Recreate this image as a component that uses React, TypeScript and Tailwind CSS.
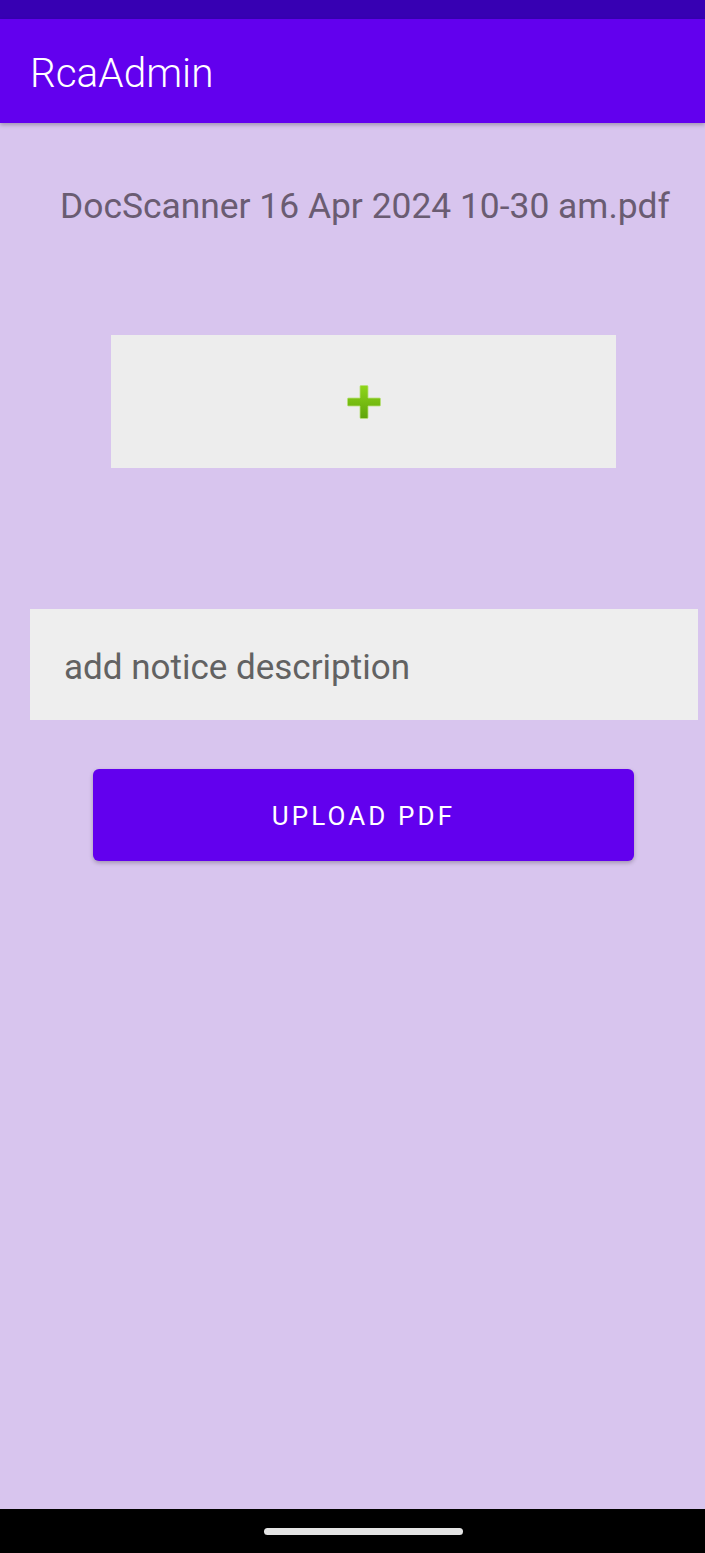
import React from 'react';

const font = { fontFamily: 'Roboto, "Noto Sans", sans-serif' };

function PlusIcon() {
    return (
        <svg width="36" height="36" viewBox="0 0 36 36">
            <defs>
                <linearGradient id="plusGreen" x1="0" y1="0" x2="0" y2="1">
                    <stop offset="0" stopColor="#8fd61a" />
                    <stop offset="1" stopColor="#5fa40a" />
                </linearGradient>
            </defs>
            <path
                d="M14 2.5 Q14 1.5 15 1.5 H21 Q22 1.5 22 2.5 V14 H33.5 Q34.5 14 34.5 15 V21 Q34.5 22 33.5 22 H22 V33.5 Q22 34.5 21 34.5 H15 Q14 34.5 14 33.5 V22 H2.5 Q1.5 22 1.5 21 V15 Q1.5 14 2.5 14 H14 Z"
                fill="url(#plusGreen)"
                stroke="#b9e07a"
                strokeWidth="0.8"
            />
        </svg>
    );
}

export default function App() {
    return (
        <div className="w-[705px] h-[1553px] flex flex-col bg-[#d8c5ee]" style={font}>
            {/* Status bar */}
            <div className="h-[19px] bg-[#3700b3]" />

            {/* App bar */}
            <div className="h-[104px] bg-[#6200ee] flex items-center pl-[30px] shadow-[0_2px_4px_rgba(0,0,0,0.25)] relative z-10">
                <span className="text-white text-[40.5px] font-light leading-none pt-[4px]">RcaAdmin</span>
            </div>

            {/* Content */}
            <div className="flex-1 flex flex-col">
                <p className="mt-[62px] pl-[60px] text-[35.4px] leading-[42px] text-[#6a5c72] whitespace-nowrap">
                    DocScanner 16 Apr 2024 10-30 am.pdf
                </p>

                <div className="mt-[108px] ml-[111px] w-[505px] h-[133px] bg-[#ededed] flex items-center justify-center">
                    <PlusIcon />
                </div>

                <div className="mt-[141px] ml-[30px] w-[668px] h-[111px] bg-[#eeeeee] flex items-center pl-[34px]">
                    <span className="text-[35px] text-[#626262] leading-none pt-[5px]">add notice description</span>
                </div>

                <button className="mt-[49px] ml-[93px] w-[541px] h-[92px] rounded-[6px] bg-[#6200ee] text-white text-[26px] tracking-[0.12em] shadow-[0_2px_4px_rgba(0,0,0,0.25)] flex items-center justify-center pt-[3px]">
                    UPLOAD PDF
                </button>
            </div>

            {/* Navigation bar */}
            <div className="h-[44px] bg-black flex items-center pl-[264px]">
                <div className="w-[199px] h-[7px] rounded-full bg-[#e4e4e4]" />
            </div>
        </div>
    );
}
